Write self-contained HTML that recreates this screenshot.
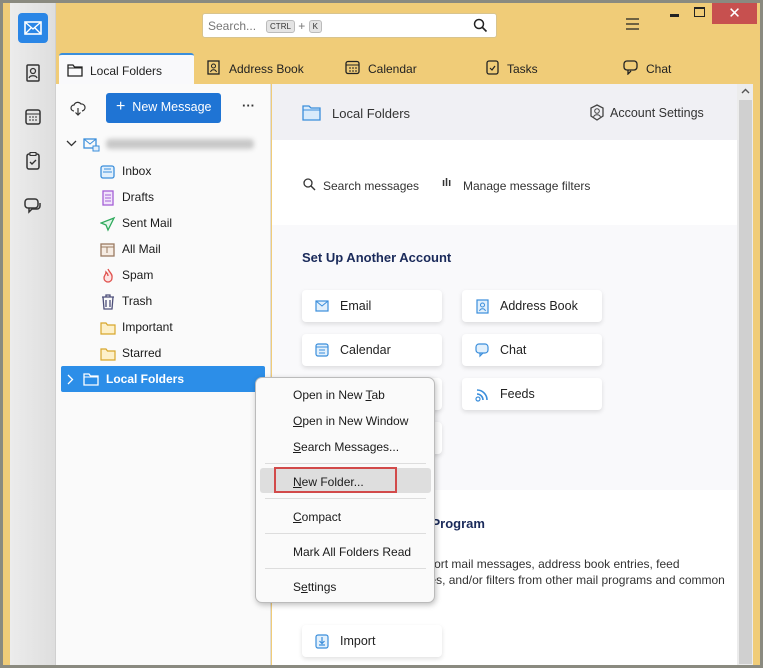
<!DOCTYPE html>
<html><head><meta charset="utf-8"><style>
*{box-sizing:border-box;margin:0;padding:0}
body{width:763px;height:668px;overflow:hidden;background:#8a8a80;font-family:"Liberation Sans",sans-serif;font-size:12px;color:#1a1a1a;position:relative}
.abs{position:absolute}
#frame{left:3px;top:3px;width:757px;height:662px;background:#f0cc78}
#side{left:10px;top:3px;width:46px;height:662px;background:linear-gradient(90deg,#ececec,#dedede);border-right:1px solid #d0d0d0}
.sicon{position:absolute;left:13px;width:20px;height:20px}
#search{left:202px;top:13px;width:295px;height:25px;background:#fff;border:1px solid #d8c48e;border-radius:3px;color:#777;font-size:12px;padding:5px 5px}
.kbd{display:inline-block;background:#e4e4e4;border:1px solid #bbb;border-radius:3px;font-size:8px;padding:1px 3px;color:#333;vertical-align:1px}
.tab{top:53px;height:31px;font-size:12px;color:#222;padding-top:9px}
#tab1{left:59px;width:135px;background:#f9f9fb;border-top:2px solid #3b8edb;border-radius:3px 3px 0 0;padding-left:31px}
#folders{left:56px;top:84px;width:215px;height:581px;background:#fafafa;border-right:1px solid #ddd}
#main{left:272px;top:84px;width:465px;height:581px;background:#fff}
#scroll{left:737px;top:84px;width:16px;height:581px;background:#ececec}
#thumb{left:739px;top:100px;width:13px;height:564px;background:#d0d0d0}
.fi{position:absolute;left:66px;font-size:12px}
.fi svg{position:absolute;left:-22px;top:0}
.card{position:absolute;width:140px;height:32px;background:#fff;border-radius:4px;box-shadow:0 2px 5px rgba(0,0,0,.12);font-size:12.5px;padding:9px 0 0 38px;color:#222}
.card svg{position:absolute;left:13px;top:9px}
#menu{left:255px;top:377px;width:180px;height:226px;background:#fafafa;border:1px solid #bbb;border-radius:7px;box-shadow:1px 2px 6px rgba(0,0,0,.25);font-size:12px}
.mi{position:absolute;left:37px}
.sep{position:absolute;left:9px;width:161px;height:1px;background:#ddd}
u{text-decoration:underline}
</style></head><body>
<div id="frame" class="abs"></div>
<div id="side" class="abs">
 <div class="abs" style="left:8px;top:10px;width:30px;height:30px;background:#2a86e6;border-radius:4px"><svg width="30" height="30"><rect x="7" y="9" width="16" height="12" fill="none" stroke="#fff" stroke-width="1.6"/><path d="M7 9l8 7 8-7M7 21l6-6M23 21l-6-6" fill="none" stroke="#fff" stroke-width="1.4"/></svg></div>
 <svg class="sicon" style="top:60px" viewBox="0 0 20 20"><rect x="4" y="2" width="12" height="16" rx="1" fill="none" stroke="#333" stroke-width="1.5"/><circle cx="10" cy="8" r="2.5" fill="none" stroke="#333" stroke-width="1.3"/><path d="M6 15c1-3 7-3 8 0" fill="none" stroke="#333" stroke-width="1.3"/></svg>
 <svg class="sicon" style="top:104px" viewBox="0 0 20 20"><rect x="3" y="3" width="14" height="14" rx="2" fill="none" stroke="#333" stroke-width="1.5"/><path d="M3 7h14M6 10h2M9 10h2M12 10h2M6 13h2M9 13h2M12 13h2" stroke="#333"/></svg>
 <svg class="sicon" style="top:148px" viewBox="0 0 20 20"><rect x="4" y="3" width="12" height="15" rx="2" fill="none" stroke="#333" stroke-width="1.5"/><rect x="7" y="1.5" width="6" height="3" fill="#ddd" stroke="#333"/><path d="M7 11l2 2 4-4" fill="none" stroke="#333" stroke-width="1.4"/></svg>
 <svg class="sicon" style="top:193px" viewBox="0 0 20 20"><rect x="2" y="3" width="13" height="9" rx="3" fill="none" stroke="#333" stroke-width="1.5"/><path d="M6 12v4l3-3h5a3 3 0 003-3V7" fill="none" stroke="#333" stroke-width="1.5"/></svg>
</div>
<div id="search" class="abs">Search... &nbsp;&nbsp;<span class="kbd">CTRL</span> + <span class="kbd">K</span>
 <svg class="abs" style="right:8px;top:4px" width="15" height="15"><circle cx="6" cy="6" r="4.5" fill="none" stroke="#222" stroke-width="1.5"/><path d="M9.5 9.5l4 4" stroke="#222" stroke-width="1.6"/></svg></div>
<svg class="abs" style="left:626px;top:18px" width="14" height="12"><path d="M0 1h13M0 6h13M0 11h13" stroke="#222" stroke-width="1.3"/></svg>
<div class="abs" style="left:670px;top:14px;width:9px;height:3px;background:#222"></div>
<div class="abs" style="left:694px;top:7px;width:11px;height:10px;border:1.5px solid #222;border-top-width:2.5px"></div>
<div class="abs" style="left:712px;top:3px;width:45px;height:21px;background:#c7504f;color:#fff;text-align:center;font-size:15px;line-height:21px">✕</div>
<div id="tab1" class="abs tab">Local Folders<svg class="abs" style="left:8px;top:8px" width="16" height="14"><path d="M1 2h5l1.5 2H15v9H1z" fill="none" stroke="#222" stroke-width="1.3"/><path d="M1 5h14" stroke="#222"/></svg></div>
<div class="abs tab" style="left:229px">Address Book</div>
<svg class="abs" style="left:206px;top:60px" width="15" height="15"><rect x="2" y="1" width="11" height="13" fill="none" stroke="#222" stroke-width="1.3"/><circle cx="7.5" cy="6" r="2" fill="none" stroke="#222"/><path d="M4.5 12c1-3 5-3 6 0" fill="none" stroke="#222"/></svg>
<div class="abs tab" style="left:368px">Calendar</div>
<svg class="abs" style="left:345px;top:60px" width="15" height="15"><rect x="1" y="1.5" width="13" height="12" rx="2" fill="none" stroke="#222" stroke-width="1.3"/><path d="M1 5h13M4 8h2M7 8h2M10 8h2M4 11h2M7 11h2M10 11h2" stroke="#222"/></svg>
<div class="abs tab" style="left:507px">Tasks</div>
<svg class="abs" style="left:485px;top:59px" width="15" height="16"><rect x="2" y="2" width="11" height="13" rx="2" fill="none" stroke="#222" stroke-width="1.3"/><path d="M5 9l2 2 3-4" fill="none" stroke="#222" stroke-width="1.2"/></svg>
<div class="abs tab" style="left:646px">Chat</div>
<svg class="abs" style="left:623px;top:60px" width="16" height="15"><rect x="1" y="1" width="13" height="9" rx="3" fill="none" stroke="#222" stroke-width="1.3"/><path d="M5 10v4l3-3" fill="none" stroke="#222" stroke-width="1.3"/></svg>

<div id="folders" class="abs"></div>
<svg class="abs" style="left:70px;top:100px" width="16" height="16"><path d="M4 11a3 3 0 010-6 4 4 0 017-1 3 3 0 011 7" fill="none" stroke="#333" stroke-width="1.2"/><path d="M8 8v7M5.5 12.5L8 15l2.5-2.5" fill="none" stroke="#333" stroke-width="1.2"/></svg>
<div class="abs" style="left:106px;top:93px;width:115px;height:30px;background:#1f74d4;border-radius:3px;color:#fff;font-size:12.5px;padding:7px 0 0 10px"><span style="font-size:16px;line-height:10px">+</span>&nbsp;&nbsp;New Message</div>
<div class="abs" style="left:242px;top:98px;font-size:13px;font-weight:bold;color:#333">···</div>
<svg class="abs" style="left:66px;top:140px" width="11" height="8"><path d="M1 1l4.5 4.5L10 1" fill="none" stroke="#333" stroke-width="1.3"/></svg>
<svg class="abs" style="left:83px;top:138px" width="17" height="14"><rect x="1" y="1" width="12" height="9" fill="none" stroke="#3b8edb" stroke-width="1.3"/><path d="M1 1l6 5 6-5" fill="none" stroke="#3b8edb"/><rect x="10" y="8" width="6" height="5" fill="#e4f0fb" stroke="#3b8edb"/></svg>
<div class="abs" style="left:106px;top:139px;width:148px;height:10px;background:#c8c8c8;filter:blur(2.5px);border-radius:4px"></div>
<div class="fi" style="left:122px;top:164px"><svg width="16" height="16"><rect x="1" y="2" width="13" height="12" rx="2" fill="#e2f0fc" stroke="#3b8edb" stroke-width="1.3"/><path d="M3 8h9M4 5h7" stroke="#3b8edb"/></svg>Inbox</div>
<div class="fi" style="left:122px;top:190px"><svg width="16" height="16"><rect x="3" y="1" width="10" height="14" fill="#f1e4fb" stroke="#a45fd6" stroke-width="1.3"/><path d="M5 5h6M5 8h6M5 11h6" stroke="#a45fd6"/></svg>Drafts</div>
<div class="fi" style="left:122px;top:216px"><svg width="16" height="16"><path d="M14 2L1 7l5 2 2 5z" fill="#e3f6ea" stroke="#2faa5c" stroke-width="1.3"/></svg>Sent Mail</div>
<div class="fi" style="left:122px;top:242px"><svg width="16" height="16"><rect x="1" y="2" width="13" height="12" fill="#f6ece3" stroke="#9b7b62" stroke-width="1.3"/><path d="M1 5h13M7 5v6" stroke="#9b7b62"/></svg>All Mail</div>
<div class="fi" style="left:122px;top:268px"><svg width="16" height="16"><path d="M8 1c1 3 5 5 4 9a4 4 0 01-8 0c0-3 2-3 2-6 1 1 2 2 2 4" fill="#fde3e3" stroke="#e0524e" stroke-width="1.3"/></svg>Spam</div>
<div class="fi" style="left:122px;top:294px"><svg width="16" height="16"><path d="M2 3h12M6 3V1h4v2M3 3l1 12h8l1-12M6 6v7M10 6v7" fill="none" stroke="#4d4f7a" stroke-width="1.3"/></svg>Trash</div>
<div class="fi" style="left:122px;top:320px"><svg width="16" height="16"><path d="M1 3h5l1.5 2H15v9H1z" fill="#fdf0c9" stroke="#d8a62c" stroke-width="1.2"/></svg>Important</div>
<div class="fi" style="left:122px;top:346px"><svg width="16" height="16"><path d="M1 3h5l1.5 2H15v9H1z" fill="#fdf0c9" stroke="#d8a62c" stroke-width="1.2"/></svg>Starred</div>
<div class="abs" style="left:61px;top:366px;width:204px;height:26px;background:#2c8ee8;border-radius:2px;color:#fff;font-weight:bold;font-size:12px;padding:6px 0 0 45px">Local Folders</div>
<svg class="abs" style="left:67px;top:374px" width="8" height="11"><path d="M1 1l4.5 4.5L1 10" fill="none" stroke="#fff" stroke-width="1.3"/></svg>
<svg class="abs" style="left:83px;top:372px" width="16" height="14"><path d="M1 2h5l1.5 2H15v9H1z" fill="none" stroke="#fff" stroke-width="1.3"/><path d="M1 5h14" stroke="#fff"/></svg>

<div id="main" class="abs">
 <div class="abs" style="left:0;top:0;width:465px;height:56px;background:#f0f0f4"></div>
 <svg class="abs" style="left:30px;top:20px" width="19" height="17"><path d="M1 2h6l2 2h9v12H1z" fill="#d9ebfb" stroke="#3b8edb" stroke-width="1.3"/><path d="M1 6h17" stroke="#3b8edb"/></svg>
 <div class="abs" style="left:60px;top:22px;font-size:13px;color:#333">Local Folders</div>
 <svg class="abs" style="left:317px;top:20px" width="16" height="17"><path d="M8 1l6 3v8l-6 4-6-4V4z" fill="none" stroke="#444" stroke-width="1.3"/><circle cx="8" cy="7" r="2.3" fill="none" stroke="#444"/><path d="M4.5 13c1-3 6-3 7 0" fill="none" stroke="#444"/></svg>
 <div class="abs" style="left:338px;top:22px;font-size:12.5px;color:#333">Account Settings</div>
 <svg class="abs" style="left:31px;top:94px" width="13" height="13"><circle cx="5" cy="5" r="4" fill="none" stroke="#333" stroke-width="1.3"/><path d="M8 8l4 4" stroke="#333" stroke-width="1.4"/></svg>
 <div class="abs" style="left:51px;top:95px;font-size:12px;color:#333">Search messages</div>
 <div class="abs" style="left:170px;top:93px;font-size:11px;color:#333;font-weight:bold">ılı</div>
 <div class="abs" style="left:191px;top:95px;font-size:12px;color:#333">Manage message filters</div>
 <div class="abs" style="left:0;top:141px;width:465px;height:265px;background:#f9f9fb"></div>
 <div class="abs" style="left:30px;top:166px;font-size:13px;font-weight:bold;color:#1a2a5a">Set Up Another Account</div>
 <div class="abs" style="left:30px;top:432px;font-size:13px;font-weight:bold;color:#1a2a5a">Import from Another Program</div>
 <div class="abs" style="left:30px;top:472px;font-size:12px;color:#333;line-height:16px;width:440px;white-space:nowrap">Thunderbird lets you import mail messages, address book entries, feed<br>subscriptions, preferences, and/or filters from other mail programs and common</div>
</div>
<div class="card" style="left:302px;top:290px"><svg width="14" height="14"><rect x="1" y="2" width="12" height="10" fill="#e2f0fc" stroke="#3b8edb" stroke-width="1.2"/><path d="M1 2l6 5 6-5" fill="none" stroke="#3b8edb"/></svg>Email</div>
<div class="card" style="left:462px;top:290px"><svg width="14" height="15"><rect x="2" y="1" width="11" height="13" fill="#e2f0fc" stroke="#3b8edb" stroke-width="1.2"/><circle cx="7.5" cy="6" r="2" fill="none" stroke="#3b8edb"/><path d="M4.5 12c1-3 5-3 6 0" fill="none" stroke="#3b8edb"/></svg>Address Book</div>
<div class="card" style="left:302px;top:334px"><svg width="14" height="14"><rect x="1" y="1" width="12" height="12" rx="2" fill="#e2f0fc" stroke="#3b8edb" stroke-width="1.2"/><path d="M1 4h12M4 7h6M4 10h6" stroke="#3b8edb"/></svg>Calendar</div>
<div class="card" style="left:462px;top:334px"><svg width="15" height="15"><rect x="1" y="1" width="12" height="9" rx="3" fill="#e2f0fc" stroke="#3b8edb" stroke-width="1.2"/><path d="M5 10v3l3-3" fill="none" stroke="#3b8edb" stroke-width="1.2"/></svg>Chat</div>
<div class="card" style="left:302px;top:378px"></div>
<div class="card" style="left:302px;top:422px"></div>
<div class="card" style="left:462px;top:378px"><svg width="15" height="15"><circle cx="3" cy="12" r="2" fill="none" stroke="#3b8edb" stroke-width="1.2"/><path d="M2 7a6 6 0 016 6M2 3a10 10 0 0110 10" fill="none" stroke="#3b8edb" stroke-width="1.6"/></svg>Feeds</div>
<div class="card" style="left:302px;top:625px"><svg width="14" height="15"><rect x="1" y="1" width="12" height="13" rx="2" fill="#e2f0fc" stroke="#3b8edb" stroke-width="1.2"/><path d="M7 3v6M4.5 7L7 9.5 9.5 7M4 11h6" fill="none" stroke="#3b8edb" stroke-width="1.2"/></svg>Import</div>
<div id="scroll" class="abs"></div>
<div id="thumb" class="abs"></div>
<svg class="abs" style="left:741px;top:88px" width="9" height="6"><path d="M1 5l3.5-3.5L8 5" fill="none" stroke="#555" stroke-width="1.4"/></svg>

<div id="menu" class="abs">
 <div class="mi" style="top:10px">Open in New <u>T</u>ab</div>
 <div class="mi" style="top:36px"><u>O</u>pen in New Window</div>
 <div class="mi" style="top:62px"><u>S</u>earch Messages...</div>
 <div class="sep" style="top:85px"></div>
 <div class="abs" style="left:4px;top:90px;width:171px;height:25px;background:#dedede;border-radius:3px"></div>
 <div class="abs" style="left:18px;top:89px;width:123px;height:26px;border:2px solid #d24a4a"></div>
 <div class="mi" style="top:97px"><u>N</u>ew Folder...</div>
 <div class="sep" style="top:120px"></div>
 <div class="mi" style="top:132px"><u>C</u>ompact</div>
 <div class="sep" style="top:155px"></div>
 <div class="mi" style="top:167px">Mark All Folders Read</div>
 <div class="sep" style="top:190px"></div>
 <div class="mi" style="top:202px">S<u>e</u>ttings</div>
</div>
</body></html>
